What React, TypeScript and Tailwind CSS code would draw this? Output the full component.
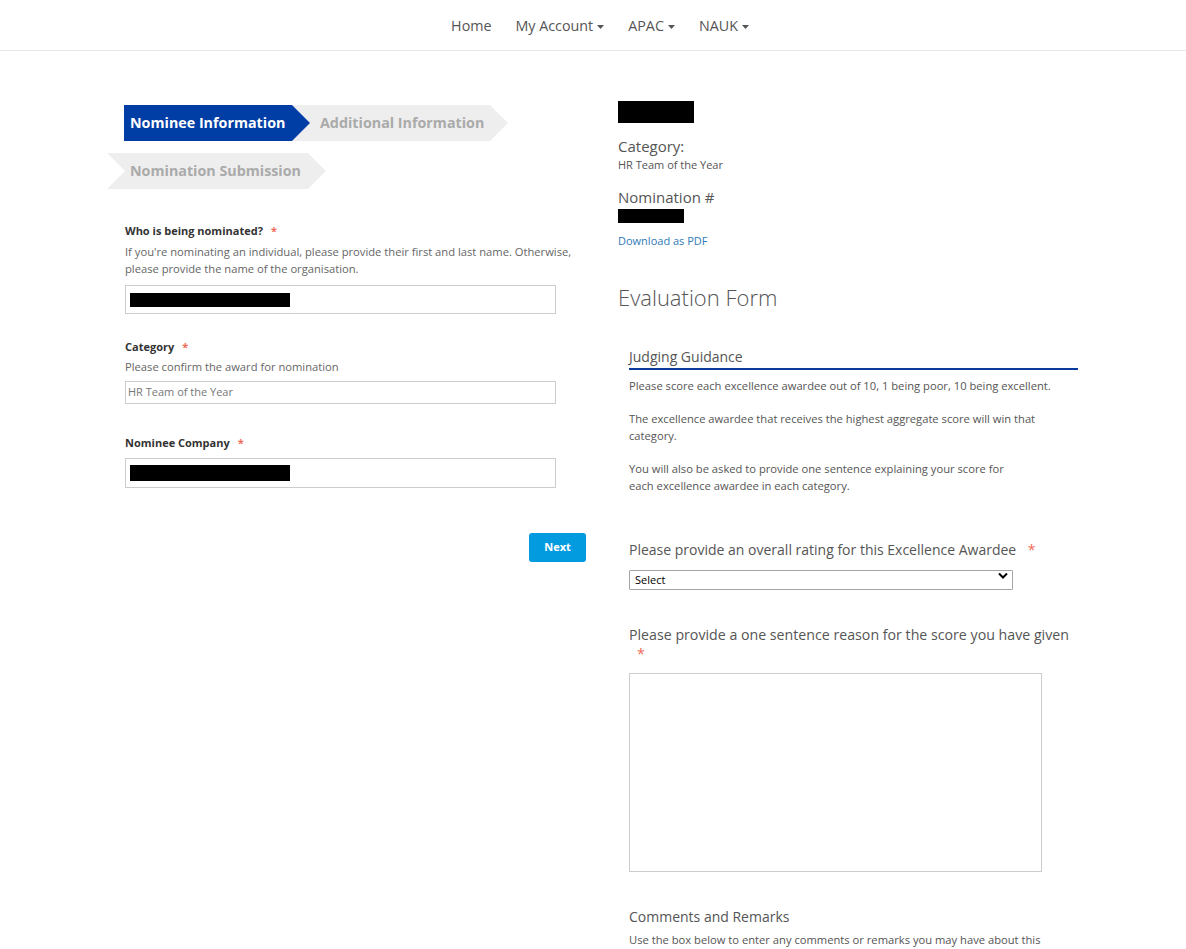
import React from "react";

const font = { fontFamily: '"Open Sans", "Liberation Sans", sans-serif' };

function Caret() {
  return (
    <svg width="7" height="4" viewBox="0 0 7 4" className="ml-[4px] mt-[2px]">
      <path d="M0 0 L7 0 L3.5 4 Z" fill="#555" />
    </svg>
  );
}

function Req() {
  return <span className="ml-[8px] text-[#f06a58]">*</span>;
}

function Redact({ w, h }: { w: string; h: string }) {
  return <div className={`${w} ${h} bg-black`} />;
}

export default function App() {
  return (
    <div className="min-h-[949px] bg-white text-[#333]" style={font}>
      {/* Header */}
      <header className="h-[51px] border-b border-[#e7e7e7] flex items-center justify-center">
        <nav className="flex items-center gap-[24px] text-[14.3px] text-[#555] pl-[14px] pt-[2px]">
          <span>Home</span>
          <span className="flex items-center">My Account<Caret /></span>
          <span className="flex items-center">APAC<Caret /></span>
          <span className="flex items-center">NAUK<Caret /></span>
        </nav>
      </header>

      <div className="flex pl-[124px]">
        {/* Left column */}
        <div className="w-[462px] pt-[54px]">
          <div className="flex flex-wrap gap-y-[12px] w-[400px]">
            <div
              className="relative z-10 h-[36px] w-[186px] bg-[#003da5] text-white text-[14.3px] font-bold flex items-center pl-[6px]"
              style={{ clipPath: "polygon(0 0, calc(100% - 18px) 0, 100% 50%, calc(100% - 18px) 100%, 0 100%)" }}
            >
              Nominee Information
            </div>
            <div
              className="relative h-[36px] w-[216px] ml-[-18px] bg-[#eeeeee] text-[#aaaaaa] text-[14.3px] font-bold flex items-center pl-[28px]"
              style={{ clipPath: "polygon(0 0, calc(100% - 18px) 0, 100% 50%, calc(100% - 18px) 100%, 0 100%, 18px 50%)" }}
            >
              Additional Information
            </div>
            <div
              className="h-[36px] w-[219px] ml-[-17px] bg-[#eeeeee] text-[#aaaaaa] text-[14.3px] font-bold flex items-center pl-[23px]"
              style={{ clipPath: "polygon(0 0, calc(100% - 18px) 0, 100% 50%, calc(100% - 18px) 100%, 0 100%, 18px 50%)" }}
            >
              Nomination Submission
            </div>
          </div>

          <div className="pl-[1px]">
            {/* Field 1 */}
            <div className="mt-[33px] text-[11px] leading-[17px] font-bold text-[#333]">
              Who is being nominated?<Req />
            </div>
            <div className="mt-[4px] text-[11.2px] leading-[17px] text-[#666] w-[455px]">
              If you're nominating an individual, please provide their first and last name. Otherwise, please provide the name of the organisation.
            </div>
            <div className="mt-[8px] w-[431px] h-[29px] border border-[#cccccc] flex items-center pl-[4px]">
              <Redact w="w-[160px]" h="h-[14px]" />
            </div>

            {/* Field 2 */}
            <div className="mt-[24px] text-[11px] leading-[17px] font-bold text-[#333]">
              Category<Req />
            </div>
            <div className="mt-[3px] text-[11.2px] leading-[17px] text-[#666]">
              Please confirm the award for nomination
            </div>
            <div className="mt-[6px] w-[431px] h-[23px] border border-[#cccccc] flex items-center pl-[2px] text-[11px] text-[#777]">
              HR Team of the Year
            </div>

            {/* Field 3 */}
            <div className="mt-[30px] text-[11px] leading-[17px] font-bold text-[#333]">
              Nominee Company<Req />
            </div>
            <div className="mt-[7px] w-[431px] h-[30px] border border-[#cccccc] flex items-center pl-[4px]">
              <Redact w="w-[160px]" h="h-[16px]" />
            </div>

            <div className="flex justify-end mt-[45px]">
              <button className="w-[57px] h-[29px] bg-[#039be0] text-white text-[11px] font-bold rounded-[3px]">
                Next
              </button>
            </div>
          </div>
        </div>

        {/* Right column */}
        <div className="ml-[32px] w-[462px] pt-[50px]">
          <Redact w="w-[76px]" h="h-[22px]" />
          <div className="mt-[13px] text-[15px] leading-[20px] text-[#555]">Category:</div>
          <div className="mt-[1px] text-[11px] leading-[16px] text-[#555]">HR Team of the Year</div>
          <div className="mt-[14px] text-[15px] leading-[20px] text-[#555]">Nomination #</div>
          <div className="mt-[2px]">
            <Redact w="w-[66px]" h="h-[14px]" />
          </div>
          <div className="mt-[10px] text-[11px] leading-[16px] text-[#2f7ab8]">Download as PDF</div>
          <div className="mt-[33px] text-[22px] leading-[30px] font-light text-[#555]">Evaluation Form</div>

          <div className="pl-[11px]">
            <div className="mt-[35px] text-[14px] leading-[20px] text-[#555] pb-[1px]">Judging Guidance</div>
            <div className="h-[2px] bg-[#0a3a9c] w-[449px]" />
            <div className="mt-[7px] text-[11.2px] leading-[17px] text-[#555]">
              <p>Please score each excellence awardee out of 10, 1 being poor, 10 being excellent.</p>
              <p className="mt-[16px] w-[420px]">
                The excellence awardee that receives the highest aggregate score will win that category.
              </p>
              <p className="mt-[16px] w-[390px]">
                You will also be asked to provide one sentence explaining your score for each excellence awardee in each category.
              </p>
            </div>

            <div className="mt-[46px] text-[14px] leading-[20px] text-[#555]">
              Please provide an overall rating for this Excellence Awardee <Req />
            </div>
            <div className="relative mt-[6px] w-[384px] h-[20px]">
              <select className="appearance-none w-full h-full border border-[#a6a6a6] text-[11px] text-black pl-[5px] bg-white rounded-[1px]">
                <option>Select</option>
              </select>
              <svg
                className="absolute right-[5px] top-[6px] pointer-events-none"
                width="10"
                height="8"
                viewBox="0 0 10 8"
              >
                <path d="M1 1.5 L5 5.5 L9 1.5" stroke="#000" strokeWidth="2" fill="none" />
              </svg>
            </div>

            <div className="mt-[39px] text-[14.2px] leading-[20px] text-[#555] w-[460px]">
              Please provide a one sentence reason for the score you have given
              <div className="pl-[8px] text-[#f06a58] leading-[18px]">*</div>
            </div>
            <textarea className="block mt-[10px] w-[413px] h-[199px] border border-[#cccccc] resize-none" />

            <div className="mt-[35px] text-[14px] leading-[20px] text-[#555]">Comments and Remarks</div>
            <div className="mt-[4px] text-[11.2px] leading-[17px] text-[#555]">
              Use the box below to enter any comments or remarks you may have about this
            </div>
          </div>
        </div>
      </div>
    </div>
  );
}
